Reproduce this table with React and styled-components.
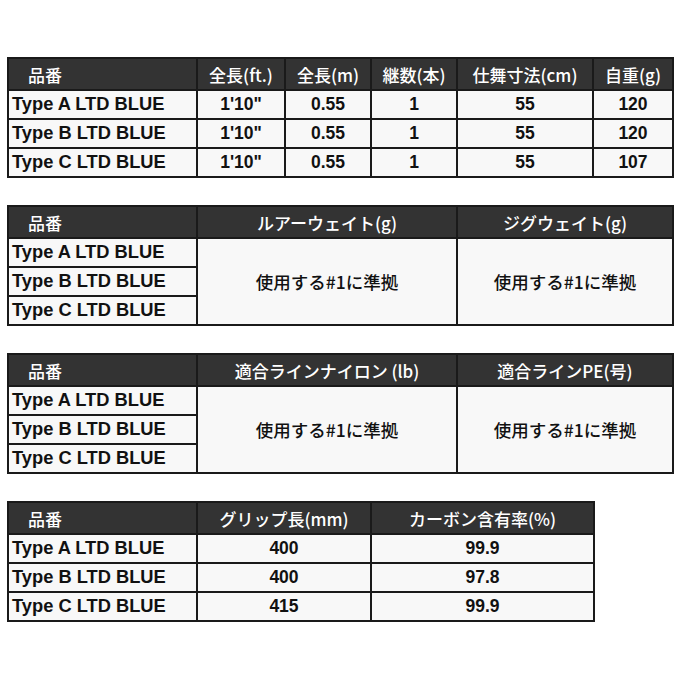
import React from "react";
import styled, { createGlobalStyle } from "styled-components";

const Global = createGlobalStyle`
  html, body { margin: 0; padding: 0; background: #fff; }
  body { font-family: "Noto Sans CJK JP", "Noto Sans", sans-serif; }
`;

const Page = styled.div`
  padding: 57px 0 0 7px;
  display: flex;
  flex-direction: column;
  gap: 27px;
`;

const Table = styled.table`
  border-collapse: collapse;
  table-layout: fixed;
  width: ${(p) => p.$w}px;
  color: #111;
`;

const HeadCell = styled.th`
  background: #333;
  color: #fff;
  font-weight: 500;
  font-size: 17px;
  height: 30px;
  padding: 0;
  border: 2px solid #1a1a1a;
  text-align: ${(p) => (p.$first ? "left" : "center")};
  padding-left: ${(p) => (p.$first ? "19px" : "0")};
  white-space: nowrap;
  line-height: 1;
`;

const NameCell = styled.td`
  background: #f8f8f8;
  font-family: "Liberation Sans", "Noto Sans CJK JP", sans-serif;
  font-weight: 700;
  font-size: 18.3px;
  height: 27px;
  padding: 0 0 0 3px;
  border: 2px solid #1a1a1a;
  text-align: left;
  white-space: nowrap;
  line-height: 1;
`;

const ValueCell = styled.td`
  background: #f8f8f8;
  font-family: "Liberation Sans", "Noto Sans CJK JP", sans-serif;
  font-weight: 700;
  font-size: 17.5px;
  padding: 0;
  border: 2px solid #1a1a1a;
  text-align: center;
  white-space: nowrap;
  line-height: 1;
`;

const MergedCell = styled.td`
  background: #f8f8f8;
  font-family: "Noto Sans CJK JP", sans-serif;
  font-weight: 500;
  font-size: 17.5px;
  padding: 0;
  border: 2px solid #1a1a1a;
  text-align: center;
  white-space: nowrap;
  line-height: 1;
`;

const names = ["Type A LTD BLUE", "Type B LTD BLUE", "Type C LTD BLUE"];

function Head({ widths, headers }) {
  return (
    <>
      <colgroup>
        {widths.map((w, i) => (
          <col key={i} style={{ width: w }} />
        ))}
      </colgroup>
      <thead>
        <tr>
          {headers.map((h, i) => (
            <HeadCell key={i} $first={i === 0}>
              {h}
            </HeadCell>
          ))}
        </tr>
      </thead>
    </>
  );
}

function SpecTable({ widths, headers, rows }) {
  const total = widths.reduce((a, b) => a + b, 0);
  return (
    <Table $w={total}>
      <Head widths={widths} headers={headers} />
      <tbody>
        {names.map((n, r) => (
          <tr key={n}>
            <NameCell>{n}</NameCell>
            {rows[r].map((v, i) => (
              <ValueCell key={i}>{v}</ValueCell>
            ))}
          </tr>
        ))}
      </tbody>
    </Table>
  );
}

function MergedTable({ widths, headers, text }) {
  const total = widths.reduce((a, b) => a + b, 0);
  return (
    <Table $w={total}>
      <Head widths={widths} headers={headers} />
      <tbody>
        {names.map((n, r) => (
          <tr key={n}>
            <NameCell>{n}</NameCell>
            {r === 0 &&
              headers.slice(1).map((_, i) => (
                <MergedCell key={i} rowSpan={3}>
                  {text}
                </MergedCell>
              ))}
          </tr>
        ))}
      </tbody>
    </Table>
  );
}

export default function App() {
  return (
    <>
      <Global />
      <Page>
        <SpecTable
          widths={[189, 88, 86, 86, 136, 80]}
          headers={["品番", "全長(ft.)", "全長(m)", "継数(本)", "仕舞寸法(cm)", "自重(g)"]}
          rows={[
            ["1'10\"", "0.55", "1", "55", "120"],
            ["1'10\"", "0.55", "1", "55", "120"],
            ["1'10\"", "0.55", "1", "55", "107"],
          ]}
        />
        <MergedTable
          widths={[189, 260, 216]}
          headers={["品番", "ルアーウェイト(g)", "ジグウェイト(g)"]}
          text="使用する#1に準拠"
        />
        <MergedTable
          widths={[189, 260, 216]}
          headers={["品番", "適合ラインナイロン (lb)", "適合ラインPE(号)"]}
          text="使用する#1に準拠"
        />
        <SpecTable
          widths={[189, 174, 223]}
          headers={["品番", "グリップ長(mm)", "カーボン含有率(%)"]}
          rows={[["400", "99.9"], ["400", "97.8"], ["415", "99.9"]]}
        />
      </Page>
    </>
  );
}
